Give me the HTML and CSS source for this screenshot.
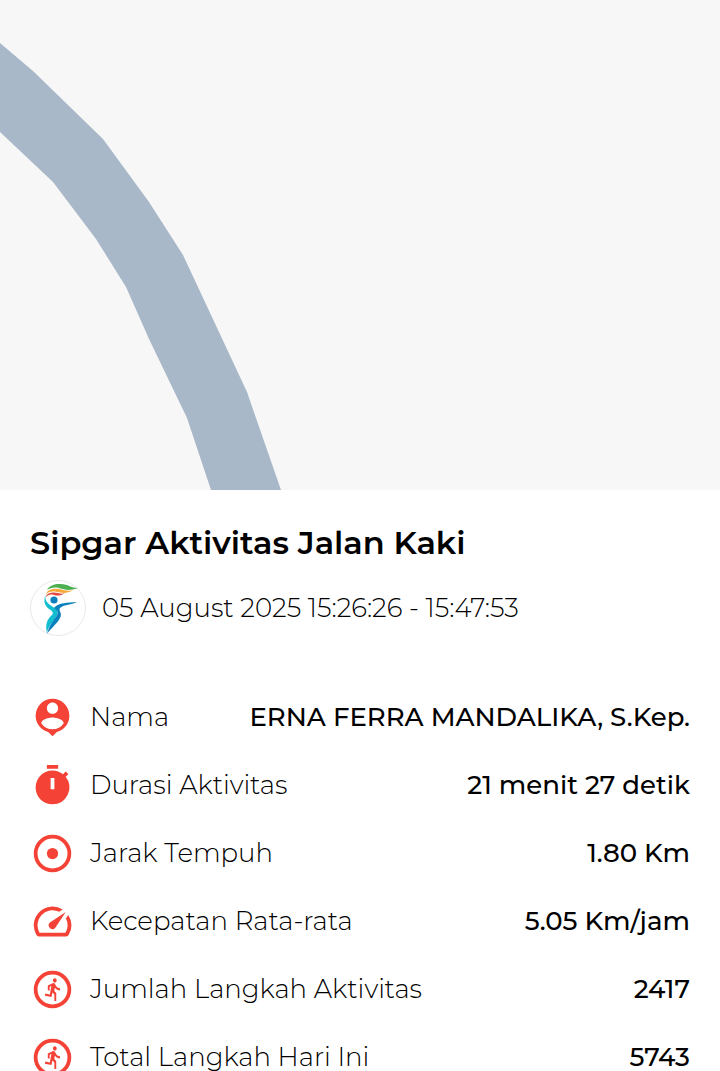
FILE: index.html
```html
<!DOCTYPE html>
<html lang="id">
<head>
    <meta charset="UTF-8">
    <meta name="viewport" content="width=device-width, initial-scale=1.0">
    <title>Sipgar Aktivitas Jalan Kaki</title>
    <link rel="stylesheet" href="styles.css">
</head>
<body>
    <svg class="map" viewBox="0 0 720 490" preserveAspectRatio="xMinYMin slice" aria-hidden="true">
        <path class="road" d="M0 43L33 71L103 139L149 202L183 255L247 392L281 490H211L187 418L149 339L126 287L96 239L53 182L0 132Z"/>
    </svg>
    <main class="panel">
        <h1>Sipgar Aktivitas Jalan Kaki</h1>
        <div class="meta">
            <svg class="logo" viewBox="0 0 56 56" aria-hidden="true">
                <circle cx="28" cy="28" r="27.5" fill="#fff" stroke="#e8e8e8"/>
                <path fill="#4caf50" d="M17 10C20 4 29 3 37 5C41 7 44 8 48 8C40 11 35 10 29 8C24 7 20 8 17 10Z"/>
                <path fill="#f5a93a" d="M16 14C18 8 27 8 33 10C37 11 41 11 43 10C37 14 32 13 27 12C22 11 18 12 16 14Z"/>
                <path fill="#e5483c" d="M16 17C17 12 24 12 28 13C31 14 33 14 35 13C31 16 27 16 24 15C20 14 18 15 16 17Z"/>
                <circle cx="24" cy="20" r="3.6" fill="#0a80bd"/>
                <path fill="#12bdd0" d="M16 14C14 20 17 23 23 27C28 30 29 32 26 37C22 43 18 47 17 53C15 45 17 39 22 35C24 32 22 31 19 29C13 24 14 19 16 14Z"/>
                <path fill="#0a80bd" d="M24 28C29 22 37 23 47 22C41 25 35 24 30 28C28 31 33 33 30 38C27 44 21 48 17 54C19 46 22 42 26 37C29 32 28 31 24 28Z"/>
            </svg>
            <time datetime="2025-08-05T15:26:26">05 August 2025 15:26:26 - 15:47:53</time>
        </div>
        <dl class="stats">
            <div class="stat">
                <svg class="icon" viewBox="0 0 24 24" aria-hidden="true"><path d="M12 2a9 9 0 0 0-9 9c0 4.17 2.84 7.67 6.69 8.69L12 22l2.31-2.31A9 9 0 0 0 21 11a9 9 0 0 0-9-9zm0 2c1.66 0 3 1.34 3 3s-1.34 3-3 3-3-1.34-3-3 1.34-3 3-3zm0 14.3a7.2 7.2 0 0 1-6-3.22c.03-1.99 4-3.08 6-3.08s5.97 1.09 6 3.08a7.2 7.2 0 0 1-6 3.22z"/></svg>
                <dt>Nama</dt>
                <dd>ERNA FERRA MANDALIKA, S.Kep.</dd>
            </div>
            <div class="stat">
                <svg class="icon" viewBox="0 0 24 24" aria-hidden="true"><path d="M19.03 7.39l1.42-1.42c-.45-.51-.9-.97-1.41-1.41L17.62 6c-1.55-1.26-3.5-2-5.62-2a9 9 0 0 0-9 9c0 4.97 4.02 9 9 9a9 9 0 0 0 7.03-14.61zM13 14h-2V8h2v6zm2-13H9v2h6V1z"/></svg>
                <dt>Durasi Aktivitas</dt>
                <dd>21 menit 27 detik</dd>
            </div>
            <div class="stat">
                <svg class="icon" viewBox="0 0 24 24" aria-hidden="true"><circle class="ring" cx="12" cy="12" r="9"/><circle cx="12" cy="12" r="3"/></svg>
                <dt>Jarak Tempuh</dt>
                <dd>1.80 Km</dd>
            </div>
            <div class="stat">
                <svg class="icon" viewBox="0 0 24 24" aria-hidden="true"><path d="m20.38 8.57-1.23 1.85a8 8 0 0 1-.22 7.58H5.07A8 8 0 0 1 15.58 6.85l1.85-1.23A10 10 0 0 0 3.35 19a2 2 0 0 0 1.72 1h13.85a2 2 0 0 0 1.74-1 10 10 0 0 0-.27-10.44zm-9.79 6.84a2 2 0 0 0 2.83 0l5.66-8.49-8.49 5.66a2 2 0 0 0 0 2.83z"/></svg>
                <dt>Kecepatan Rata-rata</dt>
                <dd>5.05 Km/jam</dd>
            </div>
            <div class="stat">
                <svg class="icon" viewBox="0 0 24 24" aria-hidden="true"><circle class="ring" cx="12" cy="12" r="9"/><path transform="translate(6.5 5.2) scale(.5 .56)" d="M13.49 5.48c1.1 0 2-.9 2-2s-.9-2-2-2-2 .9-2 2 .9 2 2 2zm-3.6 13.9l1-4.4 2.1 2v6h2v-7.5l-2.1-2 .6-3c1.3 1.5 3.3 2.5 5.5 2.5v-2c-1.9 0-3.5-1-4.3-2.4l-1-1.6c-.4-.6-1-1-1.7-1-.3 0-.5.1-.8.1l-5.2 2.2v4.7h2v-3.4l1.8-.7-1.6 8.1-4.9-1-.4 2 7 1.4z"/></svg>
                <dt>Jumlah Langkah Aktivitas</dt>
                <dd>2417</dd>
            </div>
            <div class="stat">
                <svg class="icon" viewBox="0 0 24 24" aria-hidden="true"><circle class="ring" cx="12" cy="12" r="9"/><path transform="translate(6.5 5.2) scale(.5 .56)" d="M13.49 5.48c1.1 0 2-.9 2-2s-.9-2-2-2-2 .9-2 2 .9 2 2 2zm-3.6 13.9l1-4.4 2.1 2v6h2v-7.5l-2.1-2 .6-3c1.3 1.5 3.3 2.5 5.5 2.5v-2c-1.9 0-3.5-1-4.3-2.4l-1-1.6c-.4-.6-1-1-1.7-1-.3 0-.5.1-.8.1l-5.2 2.2v4.7h2v-3.4l1.8-.7-1.6 8.1-4.9-1-.4 2 7 1.4z"/></svg>
                <dt>Total Langkah Hari Ini</dt>
                <dd>5743</dd>
            </div>
        </dl>
    </main>
</body>
</html>
```

FILE: styles.css
```css
body {
    font-family: Montserrat, Inter, sans-serif;
    font-size: 26px;
    line-height: 28px;
    background-color: #fff;
    color: #000;
    margin: 0;
    height: 100vh;
    overflow: hidden;
}
.map {
    display: block;
    width: 100%;
    height: 490px;
    background-color: #f7f7f7;
}
.road {
    fill: #a9b8c9;
}
.panel {
    padding: 32px 30px;
}
h1 {
    font-size: 32px;
    font-weight: 600;
    line-height: 42px;
    margin: 0 0 16px;
}
.meta {
    display: flex;
    align-items: center;
    gap: 16px;
    font-weight: 300;
}
.logo {
    width: 56px;
    height: 56px;
    flex: none;
}
.stats {
    margin: 47px 0 0;
}
.stat {
    display: flex;
    align-items: center;
    height: 68px;
}
.icon {
    width: 45px;
    height: 45px;
    flex: none;
    margin-right: 15px;
    fill: #f44336;
}
.ring {
    fill: none;
    stroke: #f44336;
    stroke-width: 2;
}
dt {
    font-weight: 300;
}
dd {
    margin: 0 0 0 auto;
    font-weight: 500;
    text-align: right;
}
```
